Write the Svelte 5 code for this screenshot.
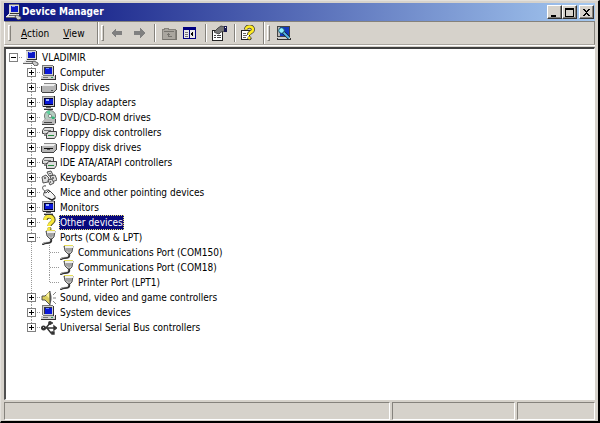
<script>
  let devices = $state([
    { name: 'Computer', icon: 'computer', closed: true },
    { name: 'Disk drives', icon: 'disk', closed: true },
    { name: 'Display adapters', icon: 'monitor', closed: true },
    { name: 'DVD/CD-ROM drives', icon: 'cd', closed: true },
    { name: 'Floppy disk controllers', icon: 'controller', closed: true },
    { name: 'Floppy disk drives', icon: 'floppy', closed: true },
    { name: 'IDE ATA/ATAPI controllers', icon: 'controller', closed: true },
    { name: 'Keyboards', icon: 'keyboard', closed: true },
    { name: 'Mice and other pointing devices', icon: 'mouse', closed: true },
    { name: 'Monitors', icon: 'monitor', closed: true },
    { name: 'Other devices', icon: 'question', closed: true },
    {
      name: 'Ports (COM & LPT)',
      icon: 'port',
      closed: false,
      children: ['Communications Port (COM150)', 'Communications Port (COM18)', 'Printer Port (LPT1)']
    },
    { name: 'Sound, video and game controllers', icon: 'sound', closed: true },
    { name: 'System devices', icon: 'computer', closed: true },
    { name: 'Universal Serial Bus controllers', icon: 'usb', closed: true }
  ]);
  let rootClosed = $state(false);
  let selected = $state('Other devices');
</script>

{#snippet icon(kind)}
  <svg class="icon" viewBox="0 0 16 16" aria-hidden="true">
    {#if kind === 'computer'}
      <path d="M1 1h11v9H1z" fill="#d0d0d0" /><path d="M12 1h1v10h-1z" fill="#333" /><path d="M1 0h11v1H1zM1 1h1v9H1z" fill="#777" />
      <path d="M3 2h8v7H3z" fill="#334" /><path d="M4 3h7v6H4z" fill="#0a18d8" /><path d="M5 3h3v1H5z" fill="#6a86ff" />
      <path d="M0 11h14v3H0z" fill="#d0d0d0" /><path d="M2 10h10v1H2z" fill="#777" />
      <path d="M14 10h1v4h-1zM0 14h15v1H0z" fill="#333" /><path d="M2 12h5v1H2z" fill="#777" /><path d="M10 12h2v1h-2z" fill="#2a9a50" />
    {:else if kind === 'root'}
      <path d="M3 1h10v9H3z" fill="#d8d8d8" /><path d="M3 0h10v1H3z" fill="#777" /><path d="M13 1h1v9h-1zM4 9h9v1H4z" fill="#333" />
      <path d="M5 2h7v6H5z" fill="#0a18c8" /><path d="M6 2h3v1H6z" fill="#89f" />
      <path d="M2 10h11l1 3H0z" fill="#e4e4e4" /><path d="M0 13h13v1H0zM3 11h7v1H3z" fill="#666" />
      <g shape-rendering="auto"><path d="M9 12l2-1 4 2v2l-3 1-2-2z" fill="#ccc" stroke="#444" stroke-width=".8" /></g>
    {:else if kind === 'disk' || kind === 'floppy'}
      <path d="M1 6l2-2h12v6l-2 2H1z" fill="#b5b5b5" /><path d="M2 5l1-1h11l-1 2H2z" fill="#eee" />
      <path d="M0 6h1v6H0zM1 12h12v1H1zM13 11h1v1h-1zM14 10h1v1h-1zM15 4h1v6h-1z" fill="#444" /><path d="M3 3h12v1H3z" fill="#888" />
      {#if kind === 'floppy'}
        <path d="M3 8h9v1H3z" fill="#111" /><path d="M6 9h3v1H6z" fill="#555" />
      {:else}
        <path d="M10 10h2v1h-2z" fill="#555" />
      {/if}
    {:else if kind === 'monitor'}
      <path d="M1 1h12v11H1z" fill="#c8c8c8" /><path d="M1 1h12v1H1zM1 2h1v9H1z" fill="#888" /><path d="M13 1h1v11H2v-1h11z" fill="#222" />
      <path d="M3 3h9v7H3z" fill="#003" /><path d="M4 4h8v5H4z" fill="#0a18d8" /><path d="M5 4h3v2H5z" fill="#9db6ff" />
      <path d="M5 12h5v1H5z" fill="#666" /><path d="M3 13h9v1H3z" fill="#bbb" /><path d="M3 14h9v1H3z" fill="#333" />
    {:else if kind === 'cd'}
      <g shape-rendering="auto">
        <circle cx="9" cy="6" r="5.6" fill="#b4cdc0" stroke="#666" stroke-width=".8" />
        <path d="M9 6L5 2a5 5 0 0 1 4-1.5z" fill="#5fd09c" /><path d="M9 6l5 1a5 5 0 0 1-2 3z" fill="#35b579" />
        <circle cx="9" cy="6" r="1.6" fill="#fff" stroke="#555" stroke-width=".6" />
      </g>
      <path d="M1 11l2-2h12v4l-2 2H1z" fill="#bbb" /><path d="M1 14h12v1H1zM14 9h1v4h-1zM3 12h8v1H3z" fill="#444" />
    {:else if kind === 'controller'}
      <g shape-rendering="auto" stroke="#444" stroke-width="1">
        <path d="M1.5 5.5l2-3h9v4l-2 2h-9z" fill="#ddd" /><path d="M5.5 9.5l2-3h8v4l-2 3h-8z" fill="#ddd" />
      </g>
      <path d="M3 5h7v1H3z" fill="#777" /><path d="M7 10h6v1H7z" fill="#238b3c" /><path d="M3 8h2v3H3z" fill="#888" />
    {:else if kind === 'keyboard'}
      <g shape-rendering="auto" fill="#ddd" stroke="#444" stroke-width=".9">
        <path d="M6 2l4-1 2 4-4 1z" /><path d="M1 7l4-2 3 3-1 4-5 1z" /><path d="M9 6l5-1 2 5-5 2z" /><path d="M7 10l4-1 2 4-4 2z" />
      </g>
      <path d="M3 7h2v2H3zM11 7h2v2h-2zM8 3h2v1H8zM9 11h1v2H9z" fill="#777" />
    {:else if kind === 'mouse'}
      <g shape-rendering="auto" stroke="#333" stroke-width=".9">
        <path d="M5 7C0 4 1 0 5 1" fill="none" />
        <path d="M3 8c1-3 4-4 6-2l4 4c3 3 0 6-3 5L5 12c-2-1-3-2-2-4z" fill="#f4f4f4" />
        <path d="M8 5L5 8l-2-1M7 8l2-2" fill="none" /><path d="M7 13l4 2 3-2" fill="none" stroke="#222" stroke-width="1.3" />
      </g>
    {:else if kind === 'question'}
      <g shape-rendering="auto">
        <path d="M4.5 5c0-5 8-5 8 0 0 3-4 2.500-4 6" fill="none" stroke="#55521c" stroke-width="4.4" />
        <circle cx="8.5" cy="14" r="2" fill="#55521c" />
        <path d="M4 5c0-5 8-5 8 0 0 3-4 2.500-4 6" fill="none" stroke="#f8e83a" stroke-width="3.2" />
        <circle cx="8" cy="13.7" r="1.6" fill="#f8e83a" />
      </g>
    {:else if kind === 'port'}
      <g shape-rendering="auto">
        <path d="M5 1h9l-1 6-2 2H9L6 6z" fill="#bbb" stroke="#444" stroke-width=".9" />
        <path d="M6 1h8v2H6z" fill="#eee" /><path d="M8 3v3M10 3v4M12 3v3" stroke="#777" stroke-width=".7" />
        <path d="M10 9c1 4-2 4-4 4s-4 0-4 2" fill="none" stroke="#333" stroke-width="2" />
        <path d="M9 10c0 3-5 1-7 4" fill="none" stroke="#ccc" stroke-width=".7" /><path d="M5 .5h9" stroke="#e6dc55" />
      </g>
    {:else if kind === 'sound'}
      <g shape-rendering="auto">
        <path d="M1 6h3l5-5v14l-5-5H1z" fill="#d9ce60" stroke="#444" stroke-width=".9" />
        <path d="M5 5l3-3v6z" fill="#fff7a0" /><path d="M9 2c2 3 2 9 0 12z" fill="#555" />
        <path d="M12 5l3-3M12 8h3M12 11l3 3" stroke="#777" stroke-width=".9" />
      </g>
    {:else if kind === 'usb'}
      <g shape-rendering="auto" fill="#333" stroke="#333" stroke-width="1.4">
        <path d="M2 8h12M5 8l4-5h3M6 8l4 5h2" fill="none" /><circle cx="2.5" cy="8" r="1.8" />
        <path d="M13 6l2.5 2-2.5 2z" /><circle cx="9" cy="3" r="1.2" /><path d="M11 12h2v2h-2z" />
      </g>
      <path d="M2 7h1v1H2z" fill="#ccc" />
    {:else if kind === 'back' || kind === 'forward'}
      <path d={kind === 'back' ? 'M1 8l5-5v3h6v4H6v3z' : 'M13 8L8 3v3H2v4h6v3z'} fill="#808080" />
    {:else if kind === 'folder'}
      <path d="M1 4h2V3h4v1h7v10H1z" fill="#aaa69f" stroke="#85827c" stroke-width="1" />
      <path d="M3 6h10v1H3zM7 8h1v4H7zM6 9h3v1H6zM8 11h3v1H8z" fill="#77746e" /><path d="M15 5h1v10H2v-1h13z" fill="#77746e" />
    {:else if kind === 'pane'}
      <path d="M0 2h13v12H0z" fill="#000080" /><path d="M1 5h5v8H1zM7 5h5v8H7z" fill="#e8e8e8" />
      <path d="M2 7h3v1H2zM2 9h3v1H2zM2 11h3v1H2z" fill="#777" /><path d="M10 6v6L7 9z" fill="#000" />
    {:else if kind === 'properties'}
      <path d="M0 5h11v11H0z" fill="#222" /><path d="M1 6h9v9H1z" fill="#fff" />
      <path d="M2 10h2v1H2zM5 10h4v1H5zM2 12h2v1H2zM5 12h4v1H5z" fill="#444" />
      <g shape-rendering="auto"><path d="M2 7l4-4 3-2 4 1v4l-4 1-2 2-3-1z" fill="#777" stroke="#333" stroke-width=".8" /></g>
      <path d="M12 1h3v6h-3z" fill="#181850" /><path d="M13 2h1v1h-1z" fill="#fff" />
    {:else if kind === 'help'}
      <path d="M0 5h9v10H0z" fill="#222" /><path d="M1 6h7v8H1z" fill="#fff" /><path d="M2 8h3v1H2zM2 10h4v1H2zM2 12h3v1H2z" fill="#666" />
      <g shape-rendering="auto">
        <path d="M5 4.5c0-4 7-4 7 0 0 3-4 2-4 5.500" fill="none" stroke="#333" stroke-width="4" />
        <circle cx="8.5" cy="13.2" r="2" fill="#333" />
        <path d="M5 4.5c0-4 7-4 7 0 0 3-4 2-4 5.500" fill="none" stroke="#ffec24" stroke-width="2.6" />
        <circle cx="8.3" cy="13" r="1.4" fill="#ffec24" />
      </g>
    {:else if kind === 'scan'}
      <path d="M1 1h13v11H1z" fill="#444" /><path d="M2 2h11v9H2z" fill="#bbb" /><path d="M4 2h9v9H4z" fill="#1238c0" />
      <path d="M1 13h14v2H1z" fill="#333" /><path d="M2 12h12v2H2z" fill="#ccc" />
      <g shape-rendering="auto"><path d="M7 7l6 6" stroke="#123" stroke-width="3.2" /><path d="M7 7l6 6" stroke="#54b8e8" stroke-width="1.8" /><circle cx="5.5" cy="5.5" r="2.8" fill="#8ff0ff" stroke="#17506c" /></g>
    {/if}
  </svg>
{/snippet}

{#snippet label(name)}
  <button class="label" class:selected={selected === name} onclick={() => (selected = name)}>{name}</button>
{/snippet}

<main class="window">
  <header class="titlebar">
    {@render icon('root')}
    <h1>Device Manager</h1>
    <div class="controls">
      <button class="control" aria-label="Minimize"><svg viewBox="0 0 9 9"><path d="M1 7h5v2H1z" /></svg></button>
      <button class="control" aria-label="Maximize"><svg viewBox="0 0 9 9"><path d="M0 0h9v9H0zM1 2v6h7V2z" fill-rule="evenodd" /></svg></button>
      <button class="control close" aria-label="Close"><svg viewBox="0 0 9 9"><path d="M1 1h2v1h1v1h1V2h1V1h2v1H7v1H6v1H5v1h1v1h1v1h1v1H6V7H5V6H4v1H3v1H1V7h1V6h1V5h1V4H3V3H2V2H1z" /></svg></button>
    </div>
  </header>

  <nav class="toolbar" aria-label="Toolbar">
    <div class="band menus">
      <span class="grip"></span>
      <button class="menu"><u>A</u>ction</button>
      <button class="menu"><u>V</u>iew</button>
    </div>
    <div class="band">
      <span class="grip"></span>
      <button class="tool" aria-label="Back" disabled>{@render icon('back')}</button>
      <button class="tool" aria-label="Forward" disabled>{@render icon('forward')}</button>
      <span class="separator"></span>
      <button class="tool" aria-label="Up one level" disabled>{@render icon('folder')}</button>
      <button class="tool" aria-label="Show or hide console tree">{@render icon('pane')}</button>
      <span class="separator"></span>
      <button class="tool" aria-label="Properties">{@render icon('properties')}</button>
      <span class="separator"></span>
      <button class="tool" aria-label="Help">{@render icon('help')}</button>
    </div>
    <div class="band">
      <span class="grip"></span>
      <button class="tool" aria-label="Scan for hardware changes">{@render icon('scan')}</button>
    </div>
  </nav>

  <section class="tree" aria-label="Devices">
    <div class="row">
      <button class="toggle" class:closed={rootClosed} aria-label="Toggle VLADIMIR" onclick={() => (rootClosed = !rootClosed)}></button>
      <span class="stub"></span>
      {@render icon('root')}
      {@render label('VLADIMIR')}
    </div>
    {#if !rootClosed}
      <ul>
        {#each devices as device}
          <li>
            <div class="row">
              <button class="toggle" class:closed={device.closed} aria-label="Toggle {device.name}" onclick={() => (device.closed = !device.closed)}></button>
              <span class="stub"></span>
              {@render icon(device.icon)}
              {@render label(device.name)}
            </div>
            {#if device.children && !device.closed}
              <ul>
                {#each device.children as port}
                  <li>
                    <div class="row leaf">
                      <span class="stub"></span>
                      {@render icon('port')}
                      {@render label(port)}
                    </div>
                  </li>
                {/each}
              </ul>
            {/if}
          </li>
        {/each}
      </ul>
    {/if}
  </section>

  <footer class="status">
    <span class="cell message"></span>
    <span class="cell progress"></span>
    <span class="cell extra"></span>
  </footer>
</main>

<style>
  :global(body) {
    background: #000;
  }
  .window {
    box-sizing: border-box;
    display: flex;
    flex-direction: column;
    min-height: 100vh;
    padding: 2px 3px 1px 3px;
    border: 1px solid #e4e1dc;
    border-width: 1px 2px 2px 1px;
    border-right-color: #000;
    border-bottom-color: #000;
    background: #d6d2cb;
    color: #000;
    font: 10px/13px 'DejaVu Sans Condensed', 'DejaVu Sans', sans-serif;
  }
  button {
    margin: 0;
    padding: 0;
    border: 0;
    background: none;
    color: inherit;
    font: inherit;
  }
  .icon {
    display: block;
    flex: none;
    width: 16px;
    height: 16px;
    shape-rendering: crispEdges;
  }
  .titlebar {
    display: flex;
    align-items: center;
    height: 18px;
    padding: 0 1px 0 2px;
    background: linear-gradient(90deg, #08107e, #a4c8f0);
    color: #fff;
  }
  h1 {
    flex: 1;
    margin: 0;
    font-size: 10px;
    font-weight: bold;
    line-height: 18px;
  }
  .controls {
    display: flex;
  }
  .control {
    box-sizing: border-box;
    display: flex;
    align-items: center;
    justify-content: center;
    width: 15px;
    height: 14px;
    border: 1px solid;
    border-color: #fff #333 #333 #fff;
    background: #d6d2cb;
    box-shadow: inset -1px -1px #85827c;
  }
  .control svg {
    width: 9px;
    height: 9px;
    shape-rendering: crispEdges;
  }
  .close {
    margin-left: 2px;
  }
  .toolbar {
    display: flex;
    height: 22px;
    margin-bottom: 2px;
    border: 1px solid #85827c;
    border-left-color: #fff;
    border-bottom-color: #aaa69f;
    box-shadow: 0 1px #fff;
  }
  .band {
    display: flex;
    align-items: center;
    padding: 0 3px;
    border-right: 1px solid #85827c;
    box-shadow: 1px 0 #fff;
  }
  .band:last-child {
    border-right: 0;
    box-shadow: none;
  }
  .menus {
    padding-right: 5px;
  }
  .grip {
    box-sizing: border-box;
    width: 3px;
    height: 16px;
    margin-right: 3px;
    border: 1px solid;
    border-color: #fff #85827c #85827c #fff;
  }
  .menu {
    padding: 2px 7px 0;
    line-height: 18px;
  }
  .tool {
    padding: 0 3px;
  }
  .separator {
    width: 1px;
    height: 18px;
    margin: 0 3px;
    background: #85827c;
    box-shadow: 1px 0 #fff;
  }
  .tree {
    flex: 1;
    padding: 1px 3px;
    border: 1px solid #fff;
    border-top: 2px solid #404040;
    border-left: 2px solid #505050;
    background: #fff;
  }
  .row {
    display: flex;
    align-items: center;
    height: 15px;
  }
  .toggle {
    box-sizing: border-box;
    position: relative;
    width: 9px;
    height: 9px;
    border: 1px solid #808080;
    background: #fff;
  }
  .toggle::before,
  .toggle.closed::after {
    content: '';
    position: absolute;
    top: 3px;
    left: 1px;
    width: 5px;
    height: 1px;
    background: #000;
  }
  .toggle.closed::after {
    top: 1px;
    left: 3px;
    width: 1px;
    height: 5px;
  }
  .stub {
    width: 5px;
    height: 1px;
    background: repeating-linear-gradient(90deg, #fff 0 1px, #999 1px 2px);
  }
  .leaf {
    padding-left: 4px;
  }
  .leaf .stub {
    width: 10px;
  }
  .label {
    height: 15px;
    margin-left: 2px;
    border: 1px solid transparent;
    white-space: nowrap;
  }
  .selected {
    border: 1px dotted #e8e070;
    background: #08087c;
    color: #fff;
  }
  ul {
    margin: 0;
    padding: 0 0 0 18px;
    list-style: none;
  }
  li {
    position: relative;
  }
  li::before {
    content: '';
    position: absolute;
    top: 0;
    bottom: 0;
    left: 4px;
    width: 1px;
    background: repeating-linear-gradient(#999 0 1px, #fff 1px 2px);
  }
  li:last-child::before {
    bottom: auto;
    height: 8px;
  }
  .status {
    display: flex;
    gap: 2px;
    height: 18px;
    margin-top: 2px;
  }
  .cell {
    box-sizing: border-box;
    border: 1px solid;
    border-color: #85827c #fff #fff #85827c;
  }
  .message {
    flex: 1;
  }
  .progress {
    width: 123px;
  }
  .extra {
    width: 78px;
  }
</style>
